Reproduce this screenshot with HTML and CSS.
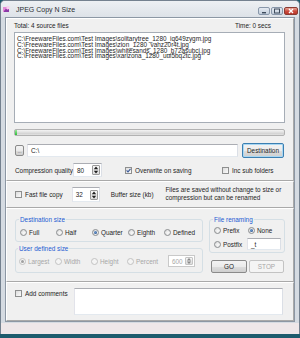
FILE: index.html
```html
<!DOCTYPE html>
<html lang="en">
<head>
    <meta charset="UTF-8">
    <title>JPEG Copy N Size</title>
    <link rel="stylesheet" href="styles.css">
</head>
<body>
<div class="window">
    <!-- title bar -->
    <div class="titlebar">
        <svg class="app-icon" width="7" height="7" viewBox="0 0 7 7">
            <rect x="0" y="1" width="6" height="5" fill="#e48bd6"/>
            <path d="M1 5 L3 2.5 L4.5 4 L6 3 L6 6 L1 6Z" fill="#8b3aa8"/>
            <rect x="3.5" y="0" width="3" height="3" fill="#f6d0ee"/>
        </svg>
        <span class="title">JPEG Copy N Size</span>
        <div class="caption-buttons">
            <span class="cap-btn"><svg width="12" height="8" viewBox="0 0 12 8"><rect x="4" y="5" width="4" height="1.4" fill="#3d4b5c"/></svg></span>
            <span class="cap-btn"><svg width="12" height="8" viewBox="0 0 12 8"><rect x="3.5" y="2" width="5" height="4" fill="none" stroke="#3d4b5c" stroke-width="1"/></svg></span>
            <span class="cap-btn close"><svg width="14" height="8" viewBox="0 0 14 8"><path d="M5 2 L9 6 M9 2 L5 6" stroke="#fff" stroke-width="1.4"/></svg></span>
        </div>
    </div>

    <div class="client">
        <!-- source files -->
        <div class="panel panel-files">
            <div class="files-header">
                <span>Total: 4 source files</span>
                <span>Time: 0 secs</span>
            </div>
            <div class="listbox">
                <div>C:\FreewareFiles.com\Test Images\solitarytree_1280_iq649zygm.jpg</div>
                <div>C:\FreewareFiles.com\Test Images\zion_1280_vahz20r4t.jpg</div>
                <div>C:\FreewareFiles.com\Test Images\whitesands_1280_b72asubcj.jpg</div>
                <div>C:\FreewareFiles.com\Test Images\xarizona_1280_uui5bq2tc.jpg</div>
            </div>
            <div class="progress"><div class="progress-fill" style="width: 2px"></div></div>
            <div class="dest-row">
                <span class="btn btn-browse">...</span>
                <span class="textbox dest-path">C:\</span>
                <span class="btn btn-default btn-dest">Destination</span>
            </div>
            <div class="options-row">
                <span class="label quality-label">Compression quality</span>
                <span class="spin spin-quality"><span class="spin-value">80</span><span class="spin-arrows"><svg width="6" height="10" viewBox="0 0 6 10"><path d="M3 1.5 L5.2 4.2 L0.8 4.2Z M0.8 5.8 L5.2 5.8 L3 8.5Z" fill="#1e1e1e"/></svg></span></span>
                <span class="check-item overwrite"><span class="checkbox checked"><svg width="5" height="5" viewBox="0 0 5 5"><path d="M0.6 2.4 L2 3.9 L4.5 0.8" stroke="#3b5a9a" stroke-width="1.1" fill="none"/></svg></span>Overwrite on saving</span>
                <span class="check-item"><span class="checkbox"></span>Inc sub folders</span>
            </div>
        </div>

        <!-- fast copy -->
        <div class="panel panel-fast">
            <span class="check-item fast-copy"><span class="checkbox"></span>Fast file copy</span>
            <span class="spin spin-buffer"><span class="spin-value">32</span><span class="spin-arrows"><svg width="6" height="10" viewBox="0 0 6 10"><path d="M3 1.5 L5.2 4.2 L0.8 4.2Z M0.8 5.8 L5.2 5.8 L3 8.5Z" fill="#1e1e1e"/></svg></span></span>
            <span class="label buffer-label">Buffer size (kb)</span>
            <span class="note">Files are saved without change to size or compression but can be renamed</span>
        </div>

        <!-- size and renaming -->
        <div class="panel panel-size">
            <div class="size-col">
                <div class="group group-dest">
                    <span class="group-title">Destination size</span>
                    <div class="radio-row">
                        <span class="radio-item"><span class="radio"></span>Full</span>
                        <span class="radio-item"><span class="radio"></span>Half</span>
                        <span class="radio-item"><span class="radio selected"></span>Quarter</span>
                        <span class="radio-item"><span class="radio"></span>Eighth</span>
                        <span class="radio-item"><span class="radio"></span>Defined</span>
                    </div>
                </div>
                <div class="group group-user">
                    <span class="group-title">User defined size</span>
                    <div class="radio-row disabled">
                        <span class="radio-item"><span class="radio selected"></span>Largest</span>
                        <span class="radio-item"><span class="radio"></span>Width</span>
                        <span class="radio-item"><span class="radio"></span>Height</span>
                        <span class="radio-item"><span class="radio"></span>Percent</span>
                        <span class="spin spin-percent"><span class="spin-value">600</span><span class="spin-arrows"><svg width="6" height="8" viewBox="0 0 6 8"><path d="M3 1 L5.2 3.4 L0.8 3.4Z M0.8 4.6 L5.2 4.6 L3 7Z" fill="#8a8a8a"/></svg></span></span>
                    </div>
                </div>
            </div>
            <div class="rename-col">
                <div class="group group-rename">
                    <span class="group-title">File renaming</span>
                    <div class="radio-row">
                        <span class="radio-item prefix"><span class="radio"></span>Prefix</span>
                        <span class="radio-item"><span class="radio selected"></span>None</span>
                    </div>
                    <div class="radio-row postfix-row">
                        <span class="radio-item postfix"><span class="radio"></span>Postfix</span>
                        <span class="textbox rename-text">_t</span>
                    </div>
                </div>
                <div class="action-row">
                    <span class="btn btn-go">GO</span>
                    <span class="btn btn-stop">STOP</span>
                </div>
            </div>
        </div>

        <!-- comments -->
        <div class="panel panel-comments">
            <span class="check-item comments-check"><span class="checkbox"></span>Add comments</span>
            <span class="textbox comments-box"></span>
        </div>
    </div>
    <div class="frame-bottom"></div>
</div>
</body>
</html>
```

FILE: styles.css
```css
* {
    box-sizing: border-box;
}
body {
    margin: 0;
    width: 300px;
    height: 338px;
    overflow: hidden;
    background-color: #1d5b6d;
    font-family: "Liberation Sans", Arial, sans-serif;
    font-size: 6.4px;
    color: #1e1e1e;
}
.window {
    height: 334px;
    background-color: #d5dbe2;
    border: 1px solid #74818f;
    border-bottom: none;
    border-radius: 5px 5px 0 0;
    display: flex;
    flex-direction: column;
}
.titlebar {
    height: 16px;
    display: flex;
    align-items: center;
    padding: 0 1px 0 2px;
    background: linear-gradient(#edf0f3, #dde2e8);
    border-radius: 4px 4px 0 0;
}
.app-icon {
    display: block;
}
.title {
    margin-left: 6px;
    font-size: 7px;
    color: #2b2f35;
}
.caption-buttons {
    margin-left: auto;
    align-self: flex-start;
    margin-top: 6px;
    display: flex;
    gap: 1px;
}
.cap-btn {
    display: block;
    width: 12px;
    height: 8px;
    border: 1px solid #8897aa;
    border-radius: 2px;
    background: linear-gradient(#e4eaf1, #c3cfdc);
    overflow: hidden;
}
.cap-btn svg {
    display: block;
    margin: -1px 0 0 -1px;
}
.cap-btn.close {
    width: 14px;
    border-color: #8a3b33;
    background: linear-gradient(#e8a596, #cc4a3c 55%, #b8382c);
}
.client {
    margin: 0 4px;
    height: 305px;
    border: 1px solid #8c97a4;
    background-color: #f0f0f0;
}
.frame-bottom {
    flex: 1;
    background: linear-gradient(#d5dbe2 0 1px, #eee7e9 1px);
}
.panel {
    border: 1px solid;
    border-color: #fff #a9a9a9 #a9a9a9 #fff;
    padding: 0 8px 0 7px;
}
.panel-files {
    height: 163px;
}
.files-header {
    margin-top: 2px;
    height: 9px;
    line-height: 9px;
    display: flex;
    justify-content: space-between;
    padding-right: 14px;
}
.listbox {
    margin-top: 2px;
    height: 91px;
    border: 1px solid #a6adb6;
    background-color: #fff;
    padding: 3px 2px;
    line-height: 5.8px;
    white-space: nowrap;
    overflow: hidden;
}
.progress {
    margin-top: 6px;
    height: 7px;
    border: 1px solid #b2b2b2;
    border-radius: 2px;
    background: linear-gradient(#f4f4f4, #dedede 50%, #cdcdcd 51%, #e2e2e2);
}
.progress-fill {
    height: 100%;
    background: linear-gradient(#9be79b, #2fbf3a);
}
.dest-row {
    margin-top: 7px;
    height: 15px;
    display: flex;
    align-items: center;
}
.btn {
    display: flex;
    align-items: center;
    justify-content: center;
    border: 1px solid #8a8a8a;
    border-radius: 2px;
    background: linear-gradient(#f3f3f3, #ebebeb 50%, #dddddd 51%, #cfcfcf);
    white-space: nowrap;
}
.btn-browse {
    margin-left: 1px;
    width: 9px;
    height: 11px;
    font-size: 5px;
    color: #555;
}
.textbox {
    display: flex;
    align-items: center;
    background-color: #fff;
    border: 1px solid;
    border-color: #abadb3 #dbdfe6 #e3e9ef #e2e3ea;
    padding-left: 3px;
    white-space: nowrap;
}
.dest-path {
    margin-left: 3px;
    width: 211px;
    height: 13px;
}
.btn-dest {
    margin-left: 4px;
    width: 42px;
    height: 15px;
}
.btn-default {
    border-color: #3c7fb1;
    box-shadow: inset 0 0 0 1px #a8d7f3;
}
.options-row {
    margin-top: 5px;
    height: 14px;
    display: flex;
    align-items: center;
}
.label {
    white-space: nowrap;
}
.quality-label {
    margin-left: 1px;
    width: 58px;
}
.spin {
    display: flex;
    align-items: center;
    justify-content: space-between;
    background-color: #fff;
    border: 1px solid;
    border-color: #abadb3 #dbdfe6 #e3e9ef #e2e3ea;
    padding: 0 1px 0 3px;
}
.spin-quality {
    width: 29px;
    height: 14px;
}
.spin-arrows {
    display: flex;
    align-items: center;
    justify-content: center;
    width: 8px;
    height: 10px;
    border: 1px solid #9a9a9a;
    border-radius: 1px;
    background: linear-gradient(#f6f6f6, #dcdcdc);
}
.check-item {
    display: flex;
    align-items: center;
    white-space: nowrap;
}
.checkbox {
    display: flex;
    align-items: center;
    justify-content: center;
    width: 7px;
    height: 7px;
    margin-right: 3px;
    border: 1px solid #8e8f8f;
    background: linear-gradient(135deg, #dcdcdc, #fbfbfb);
}
.overwrite {
    margin-left: 23px;
    width: 97px;
}
.panel-fast {
    height: 27px;
    display: flex;
    align-items: center;
}
.fast-copy {
    margin-left: 1px;
    width: 57px;
}
.spin-buffer {
    width: 28px;
    height: 15px;
}
.buffer-label {
    margin-left: 11px;
    width: 55px;
}
.note {
    width: 120px;
    line-height: 7.6px;
    margin-top: -1px;
}
.panel-size {
    height: 74px;
    display: flex;
    align-items: flex-start;
}
.size-col {
    margin-left: 1px;
    margin-top: 10px;
    width: 188px;
}
.rename-col {
    margin-left: 6px;
    margin-top: 10px;
    width: 76px;
}
.group {
    border: 1px solid #d5dfe5;
    border-radius: 3px;
    padding: 0 0 0 4px;
}
.group-title {
    display: block;
    width: max-content;
    margin: -4px 0 0 -1px;
    padding: 0 1px;
    line-height: 7px;
    background-color: #f0f0f0;
    color: #1d5bd2;
}
.group-dest {
    height: 23px;
}
.group-dest .radio-row {
    margin-top: 5px;
}
.group-user {
    margin-top: 6px;
    height: 25px;
    padding-left: 3px;
}
.group-user .radio-row {
    margin-top: 3px;
    height: 12px;
}
.radio-row {
    display: flex;
    align-items: center;
    height: 9px;
}
.radio-item {
    display: flex;
    align-items: center;
    width: 36px;
    white-space: nowrap;
}
.radio {
    width: 7px;
    height: 7px;
    margin-right: 2px;
    border: 1px solid #8b8e90;
    border-radius: 50%;
    background: radial-gradient(circle at 60% 60%, #fafafa, #d6d6d6);
    display: flex;
    align-items: center;
    justify-content: center;
}
.radio.selected::after {
    content: "";
    width: 3px;
    height: 3px;
    border-radius: 50%;
    background: radial-gradient(circle at 40% 40%, #6e9fd6, #1b3f7a);
}
.disabled {
    color: #a7a7a7;
}
.disabled .radio {
    border-color: #c2c2c2;
    background: #f4f4f4;
}
.disabled .radio.selected::after {
    background: #a0a0a0;
}
.spin-percent {
    margin-left: 5px;
    width: 27px;
    height: 12px;
    border-color: #c9c9c9;
    color: #a7a7a7;
}
.spin-percent .spin-arrows {
    height: 8px;
    border-color: #c4c4c4;
}
.group-rename {
    height: 34px;
}
.group-rename .radio-row {
    margin-top: 3px;
}
.prefix {
    width: 34px;
}
.postfix-row {
    margin-top: 2px;
    height: 12px;
}
.postfix {
    width: 33px;
}
.rename-text {
    width: 34px;
    height: 12px;
}
.action-row {
    margin-top: 7px;
    display: flex;
}
.btn-go {
    margin-left: 2px;
    width: 36px;
    height: 13px;
}
.btn-stop {
    margin-left: 2px;
    width: 35px;
    height: 13px;
    border-color: #c3c3c3;
    background: #f4f4f4;
    color: #a7a7a7;
}
.panel-comments {
    height: 39px;
    display: flex;
    align-items: flex-start;
}
.comments-check {
    margin-left: 1px;
    margin-top: 7px;
    width: 59px;
}
.comments-box {
    margin-top: 5px;
    width: 209px;
    height: 27px;
}
```
